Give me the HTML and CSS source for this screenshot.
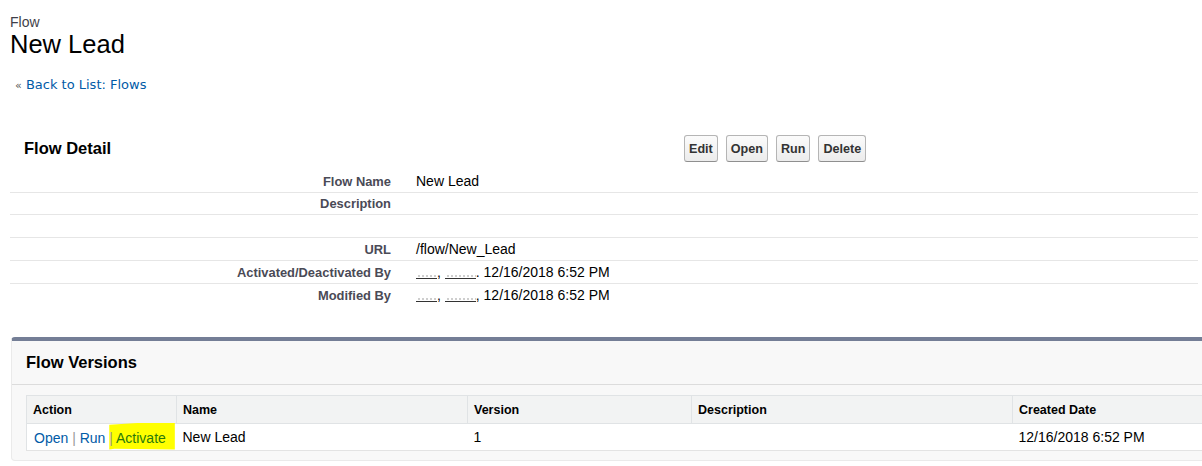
FILE: index.html
```html
<!DOCTYPE html>
<html>
<head>
<meta charset="utf-8">
<title>Flow: New Lead</title>
<link rel="stylesheet" href="styles.css">
</head>
<body>
<div class="page">
  <div class="ptitle">
    <div class="ptype">Flow</div>
    <h1 class="pname">New Lead</h1>
  </div>
  <div class="crumb"><span class="raquo">&laquo;</span> <a class="link" href="#">Back to List: Flows</a></div>

  <div class="detail">
    <div class="dhead">
      <h2 class="dtitle">Flow Detail</h2>
      <div class="btns">
        <button class="btn">Edit</button>
        <button class="btn">Open</button>
        <button class="btn">Run</button>
        <button class="btn">Delete</button>
      </div>
    </div>
    <div class="drows">
      <div class="drow first"><div class="lbl">Flow Name</div><div class="val">New Lead</div></div>
      <div class="drow second"><div class="lbl">Description</div><div class="val"></div></div>
      <div class="drow"><div class="lbl"></div><div class="val"></div></div>
      <div class="drow"><div class="lbl">URL</div><div class="val">/flow/New_Lead</div></div>
      <div class="drow"><div class="lbl">Activated/Deactivated By</div><div class="val"><span class="rd rd1"></span>, <span class="rd rd2"></span>. 12/16/2018 6:52 PM</div></div>
      <div class="drow last"><div class="lbl">Modified By</div><div class="val"><span class="rd rd1"></span>, <span class="rd rd2"></span>, 12/16/2018 6:52 PM</div></div>
    </div>
  </div>

  <div class="versions">
    <div class="vhead"><h2 class="vtitle">Flow Versions</h2></div>
    <div class="vbody">
      <table class="vtable">
        <colgroup>
          <col class="c1"><col class="c2"><col class="c3"><col class="c4"><col class="c5">
        </colgroup>
        <thead>
          <tr><th>Action</th><th>Name</th><th>Version</th><th>Description</th><th>Created Date</th></tr>
        </thead>
        <tbody>
          <tr>
            <td class="act"><a class="link" href="#">Open</a> <span class="sep">|</span> <a class="link" href="#">Run</a> <span class="hl"><span class="sep">|</span> <a class="link hlink" href="#">Activate</a></span></td>
            <td>New Lead</td>
            <td>1</td>
            <td></td>
            <td>12/16/2018 6:52 PM</td>
          </tr>
        </tbody>
      </table>
    </div>
  </div>
</div>
</body>
</html>
```

FILE: styles.css
```css
html, body {
  margin: 0;
  padding: 0;
  background: #fff;
}
body {
  font-family: "Liberation Sans", Arial, sans-serif;
  color: #000;
  overflow: hidden;
}
.page {
  padding-left: 10px;
}
.ptitle {
  padding-top: 14px;
}
.ptype {
  font-size: 14px;
  line-height: 16px;
  color: #3f3f4a;
}
.pname {
  margin: 0;
  font-size: 25.5px;
  line-height: 28px;
  font-weight: normal;
  color: #000;
}
.crumb {
  margin-top: 19px;
  padding-left: 5px;
  font-family: "DejaVu Sans", Verdana, sans-serif;
  font-size: 13px;
  line-height: 16px;
  color: #555;
}
.raquo {
  font-size: 11px;
}
.link {
  color: #015ba7;
  text-decoration: none;
}

/* Detail block */
.detail {
  width: 1188px;
  margin-top: 34px;
}
.dhead {
  display: grid;
  grid-template-columns: 674px auto;
  align-items: center;
  height: 41px;
}
.dtitle {
  margin: 0;
  padding-left: 14px;
  font-size: 16.5px;
  font-weight: bold;
  color: #000;
}
.btns {
  display: flex;
  gap: 8px;
}
.btn {
  font-family: "Liberation Sans", Arial, sans-serif;
  font-size: 12.6px;
  font-weight: bold;
  color: #333;
  height: 27px;
  padding: 0 4px;
  border: 1px solid #b5b5b5;
  border-bottom-color: #8f8f8f;
  border-radius: 3px;
  background: linear-gradient(#fbfbfb, #ececec);
  margin: 0;
}
.drow {
  display: grid;
  grid-template-columns: 396px 1fr;
  height: 22px;
  align-items: center;
  border-bottom: 1px solid #e6e6e6;
}
.drow.first {
  margin-top: 1px;
}
.drow.second {
  height: 21px;
}
.drow.last {
  border-bottom: none;
}
.lbl {
  text-align: right;
  padding-right: 15px;
  font-size: 12.9px;
  font-weight: bold;
  color: #4a4a56;
}
.val {
  padding-left: 10px;
  font-size: 14px;
  color: #000;
}
.rd {
  display: inline-block;
  height: 10px;
  border-bottom: 1px solid #333;
  vertical-align: -2px;
  background-image: radial-gradient(circle, #9a9a9a 0.5px, transparent 0.9px);
  background-size: 4px 4px;
  background-position: 1px 6px;
  background-repeat: repeat-x;
}
.rd1 { width: 21px; }
.rd2 { width: 31px; }

/* Versions block */
.versions {
  margin-top: 31px;
  margin-left: 1px;
  width: 1220px;
  background: #f8f8f8;
  border: 1px solid #eaeaea;
  border-top: 4px solid #747e96;
  border-radius: 4px;
}
.vhead {
  height: 43px;
  display: flex;
  align-items: center;
  border-bottom: 1px solid #dcdcdc;
}
.vtitle {
  margin: 0;
  padding-left: 14px;
  font-size: 16.5px;
  font-weight: bold;
  color: #000;
}
.vbody {
  padding: 10px 0 9px 14px;
}
.vtable {
  border-collapse: collapse;
  table-layout: fixed;
  width: 1200px;
  background: #fff;
  border: 1px solid #e0e3e5;
}
.c1 { width: 150px; }
.c2 { width: 291px; }
.c3 { width: 224px; }
.c4 { width: 321px; }
.c5 { width: 214px; }
.vtable th {
  height: 26px;
  padding: 1px 0 0 6px;
  text-align: left;
  font-size: 12.5px;
  font-weight: bold;
  color: #000;
  background: #f2f3f3;
  border-right: 1px solid #e0e3e5;
  border-bottom: 1px solid #e0e3e5;
}
.vtable td {
  height: 26px;
  padding: 0 0 0 6px;
  font-size: 14px;
  color: #000;
  border-bottom: 1px solid #e3e3e3;
  white-space: nowrap;
}
.vtable td.act {
  padding-left: 7px;
}
.sep {
  color: #999;
}
.hl {
  display: inline-block;
  background: #ffff00;
  padding: 7px 9px 4px 0;
  margin: -4px -9px -2px 0;
  clip-path: polygon(0 8%, 55% 0, 100% 2%, 100% 100%, 8% 97%, 0 100%);
}
.hlink {
  color: #2a7a0a;
}
```
